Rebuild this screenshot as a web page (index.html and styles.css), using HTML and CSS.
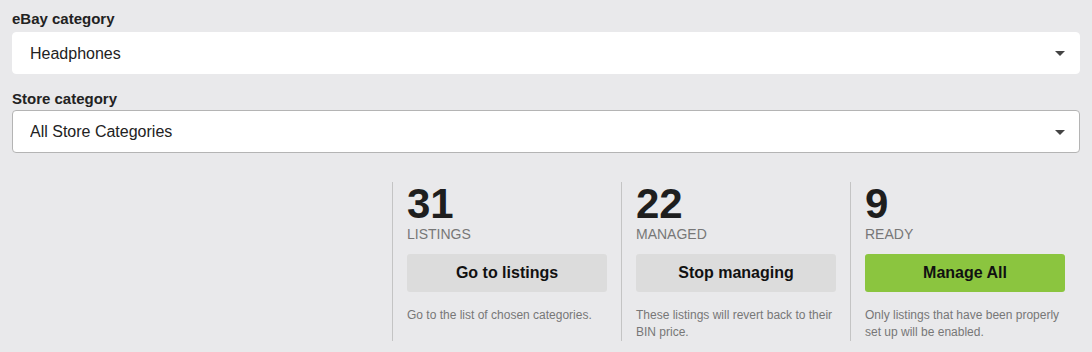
FILE: index.html
```html
<!DOCTYPE html>
<html>
	<head>
		<title>Category manager</title>
		<meta name="viewport" content="width=device-width, initial-scale=1">
		<link rel="stylesheet" href="styles.css">
	</head>
	<body>
		<main class="panel">
			<label class="field">
				<span class="field-label">eBay category</span>
				<span class="select-wrap">
					<select class="select plain">
						<option>Headphones</option>
					</select>
				</span>
			</label>
			<label class="field second">
				<span class="field-label">Store category</span>
				<span class="select-wrap">
					<select class="select boxed">
						<option>All Store Categories</option>
					</select>
				</span>
			</label>
			<div class="stats">
				<div class="stat">
					<div class="num">31</div>
					<div class="what">LISTINGS</div>
					<button class="btn">Go to listings</button>
					<p class="note">Go to the list of chosen categories.</p>
				</div>
				<div class="stat">
					<div class="num">22</div>
					<div class="what">MANAGED</div>
					<button class="btn">Stop managing</button>
					<p class="note">These listings will revert back to their BIN price.</p>
				</div>
				<div class="stat">
					<div class="num">9</div>
					<div class="what">READY</div>
					<button class="btn green">Manage All</button>
					<p class="note">Only listings that have been properly set up will be enabled.</p>
				</div>
			</div>
		</main>
	</body>
</html>
```

FILE: styles.css
```css
html, body {
	margin: 0;
	padding: 0;
	background: #e9e9eb;
	font-family: "Liberation Sans", Arial, sans-serif;
	color: #222;
}
.panel {
	padding: 9px 12px 0 12px;
}
.field {
	display: block;
}
.field.second {
	margin-top: 15px;
}
.field-label {
	display: block;
	font-size: 15px;
	font-weight: bold;
	line-height: 20px;
	margin-bottom: 3px;
}
.field.second .field-label {
	margin-bottom: 1px;
}
.select-wrap {
	display: block;
	position: relative;
}
.select-wrap::after {
	content: "";
	position: absolute;
	right: 15px;
	top: 50%;
	margin-top: -2px;
	border-left: 5px solid transparent;
	border-right: 5px solid transparent;
	border-top: 5px solid #444;
	pointer-events: none;
}
.select {
	-webkit-appearance: none;
	appearance: none;
	display: block;
	width: 100%;
	box-sizing: border-box;
	margin: 0;
	padding: 0 17px;
	font-family: inherit;
	font-size: 16px;
	color: #222;
	background: #fff;
	border-radius: 4px;
	outline: none;
}
.select.plain {
	height: 42px;
	border: 1px solid #fff;
}
.select.boxed {
	height: 43px;
	border: 1px solid #b4b4b4;
}
.stats {
	display: flex;
	justify-content: flex-end;
	margin: 29px 1px 0 0;
}
.stat {
	flex: 0 0 200px;
	border-left: 1px solid #c4c4c4;
	padding: 0 14px;
}
.num {
	font-size: 42px;
	font-weight: bold;
	line-height: 44px;
	color: #1e1e1e;
}
.what {
	font-size: 14px;
	line-height: 17px;
	color: #777;
}
.btn {
	display: block;
	width: 100%;
	height: 38px;
	margin-top: 11px;
	border: none;
	border-radius: 3px;
	background: #dcdcdc;
	font-family: inherit;
	font-size: 16px;
	font-weight: bold;
	color: #111;
	cursor: pointer;
}
.btn.green {
	background: #8bc53f;
}
.note {
	margin: 15px 0 0 0;
	font-size: 12px;
	line-height: 16.8px;
	color: #777;
}
```
